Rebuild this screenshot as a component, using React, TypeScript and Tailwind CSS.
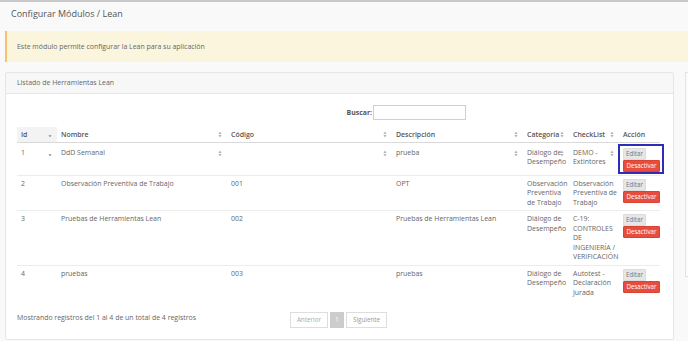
const SortBoth = () => (
  <svg width="4" height="7" viewBox="0 0 4 7">
    <path d="M2 0.6 L3.6 2.9 H0.4 Z M2 6.4 L0.4 4.1 H3.6 Z" fill="#b3b3b3" />
  </svg>
);

const SortDown = () => (
  <svg width="4" height="7" viewBox="0 0 4 7">
    <path d="M0.4 4.2 H3.6 L2 6.2 Z" fill="#8a8a8a" />
  </svg>
);

type Row = {
  id: string;
  nombre: string;
  codigo: string;
  descripcion: string;
  categoria: string;
  checklist: string;
};

const rows: Row[] = [
  { id: "1", nombre: "DdD Semanal", codigo: "", descripcion: "prueba", categoria: "Diálogo de Desempeño", checklist: "DEMO - Extintores" },
  { id: "2", nombre: "Observación Preventiva de Trabajo", codigo: "001", descripcion: "OPT", categoria: "Observación Preventiva de Trabajo", checklist: "Observación Preventiva de Trabajo" },
  { id: "3", nombre: "Pruebas de Herramientas Lean", codigo: "002", descripcion: "Pruebas de Herramientas Lean", categoria: "Diálogo de Desempeño", checklist: "C-19: CONTROLES DE INGENIERÍA / VERIFICACIÓN" },
  { id: "4", nombre: "pruebas", codigo: "003", descripcion: "pruebas", categoria: "Diálogo de Desempeño", checklist: "Autotest - Declaración Jurada" },
];

const headers = [
  { label: "Id", w: "w-[40px]", down: true },
  { label: "Nombre", w: "w-[170px]" },
  { label: "Código", w: "w-[165px]" },
  { label: "Descripción", w: "w-[131px]" },
  { label: "Categoría", w: "w-[46px]" },
  { label: "CheckList", w: "w-[50px]" },
  { label: "Acción", w: "w-[41px]", none: true },
];

const Actions = ({ first }: { first?: boolean }) => (
  <div className="relative flex flex-col items-start">
    <button className="h-[12px] w-[23px] rounded-[1px] bg-[#e6e6e6] border border-[#dcdcdc] text-[6.2px] leading-[10px] text-[#777]">
      Editar
    </button>
    <button className="h-[12px] w-[37px] rounded-[1px] bg-[#e74c3c] border border-[#d94333] text-[6.2px] leading-[10px] text-white">
      Desactivar
    </button>
    {first && (
      <div className="absolute left-[-5px] top-[-4px] w-[46px] h-[30px] border-2 border-[#2d2db8]" />
    )}
  </div>
);

export default function App() {
  return (
    <div
      className="w-[688px] h-[341px] overflow-hidden antialiased bg-[#f9f9f9] border-t-2 border-[#c9c9c9] text-[6.95px] leading-[9.5px] text-[#666]"
      style={{ fontFamily: '"Open Sans", "Liberation Sans", sans-serif' }}
    >
      <div className="pl-[11px] pt-[6px] h-[29px] text-[9px] leading-[12px] text-[#555]">
        Configurar Módulos / Lean
      </div>

      <div className="ml-[5px] h-[31px] flex items-center pl-[10px] bg-[#fbf5dd] border-l-2 border-[#f6c26a] text-[#666]">
        Este módulo permite configurar la Lean para su aplicación
      </div>

      <div className="flex gap-[11px] mt-[10px] pl-[5px]">
        <div className="w-[669px] shrink-0 bg-white border border-[#e6e6e6] rounded-[2px]">
          <div className="h-[21px] flex items-center pl-[11px] bg-[#f7f7f7] border-b border-[#e6e6e6] text-[#666]">
            Listado de Herramientas Lean
          </div>

          <div className="pl-[11px] pr-[13px] pt-[11px] pb-[11px]">
            <div className="grid grid-cols-2 w-[643px]">
              <div />
              <div className="flex items-center pl-[8px]">
                <span className="font-bold text-[#555]">Buscar:</span>
                <input className="ml-[1px] w-[93px] h-[15px] border border-[#cfcfcf] bg-white outline-none" />
              </div>
            </div>

            <table className="mt-[7px] w-[643px] table-fixed border-collapse">
              <thead>
                <tr className="border-b border-[#d9d9d9]">
                  {headers.map((h) => (
                    <th
                      key={h.label}
                      className={`${h.w} relative h-[15px] pl-[4px] text-left font-semibold text-[#555] ${h.down ? "bg-[#f3f3f3]" : ""}`}
                    >
                      {h.label}
                      {!h.none && (
                        <span className="absolute right-[5px] top-[4px]">
                          {h.down ? <SortDown /> : <SortBoth />}
                        </span>
                      )}
                    </th>
                  ))}
                </tr>
              </thead>
              <tbody>
                {rows.map((r, i) => {
                  const first = i === 0;
                  const cells = [r.id, r.nombre, r.codigo, r.descripcion, r.categoria, r.checklist];
                  return (
                    <tr key={r.id} className={i < rows.length - 1 ? "border-b border-[#ececec]" : ""}>
                      {cells.map((c, j) => (
                        <td
                          key={j}
                          className={`relative align-top pl-[4px] pr-0 ${first ? "pt-[5px] pb-[3px]" : "py-[3px]"}`}
                        >
                          {c}
                          {first && (
                            <span className="absolute right-[5px] top-[7px]">
                              {j === 0 ? <SortDown /> : <SortBoth />}
                            </span>
                          )}
                        </td>
                      ))}
                      <td className={`align-top pl-[4px] ${first ? "pt-[5px] pb-[3px]" : "py-[3px]"}`}>
                        <Actions first={first} />
                      </td>
                    </tr>
                  );
                })}
              </tbody>
            </table>

            <div className="mt-[6px] w-[643px] grid grid-cols-[1fr_auto_1fr] items-center">
              <div className="pt-[1px]">Mostrando registros del 1 al 4 de un total de 4 registros</div>
              <div className="flex gap-[2px] mt-[6px] text-[6.3px]">
                <span className="h-[16px] px-[6px] flex items-center border border-[#dedede] text-[#aaa] bg-white">Anterior</span>
                <span className="h-[16px] w-[14px] flex items-center justify-center bg-[#cccccc] text-white">1</span>
                <span className="h-[16px] px-[6px] flex items-center border border-[#dedede] text-[#999] bg-white">Siguiente</span>
              </div>
              <div />
            </div>
          </div>
        </div>

        <div className="w-[40px] shrink-0 h-[205px] bg-[#fcfcfc] border border-[#e3e3e3]" />
      </div>
    </div>
  );
}
